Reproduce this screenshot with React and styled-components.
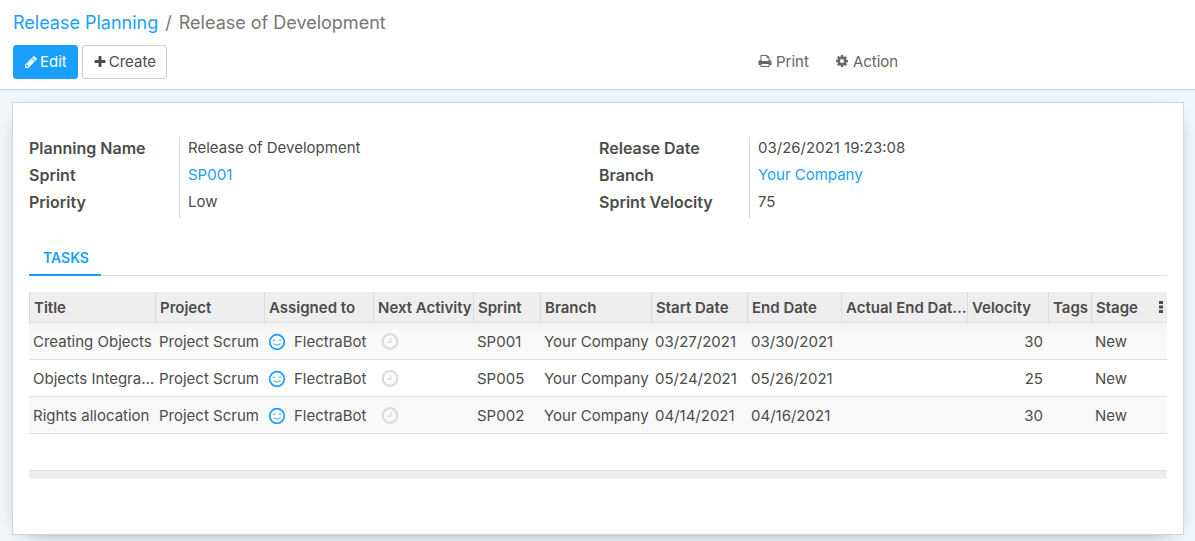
import React from "react";
import styled, { createGlobalStyle } from "styled-components";

const GlobalStyle = createGlobalStyle`
  *, *::before, *::after { box-sizing: border-box; }
  html, body, #root { min-height: 100vh; }
  body {
    margin: 0;
    background: #f0f5fa;
    color: #4c4c4c;
    font: 400 15px/23px Inter, Roboto, sans-serif;
  }
  #root { display: flex; flex-direction: column; }
  a { color: #199fff; text-decoration: none; }
  button { font: inherit; cursor: pointer; }
`;

const ControlPanel = styled.header`
  background: #fff;
  border-bottom: 1px solid #cccccc;
  padding: 9px 13px 10px;
`;

const Breadcrumb = styled.ol`
  display: flex;
  margin: 0 0 8px;
  padding: 0;
  list-style: none;
  font-size: 18px;
  line-height: 28px;
  color: #777;

  li + li::before {
    content: "/";
    padding: 0 7px;
  }
`;

const Toolbar = styled.div`
  display: grid;
  grid-template-columns: 745px 1fr;
  align-items: center;
`;

const ButtonGroup = styled.div`
  display: flex;
  gap: 4px;
`;

const Button = styled.button`
  display: flex;
  align-items: center;
  gap: 2px;
  height: 34px;
  padding: 0 10px 1px;
  border: 1px solid ${(p) => (p.$primary ? "#199fff" : "#cccccc")};
  border-radius: 3px;
  background: ${(p) => (p.$primary ? "#199fff" : "#fff")};
  color: ${(p) => (p.$primary ? "#fff" : "#4c4c4c")};
`;

const MenuGroup = styled.div`
  display: flex;
  gap: 26px;
`;

const MenuButton = styled.button`
  display: flex;
  align-items: center;
  gap: 4px;
  padding: 0 0 2px;
  border: 0;
  background: none;
  color: #666;
`;

const Glyph = styled.svg`
  width: ${(p) => p.$size || 14}px;
  height: ${(p) => p.$size || 14}px;
  flex: none;
  fill: currentColor;
`;

const Sheet = styled.main`
  margin: 12px 11px 6px 12px;
  padding: 34px 16px 55px;
  background: #fff;
  border: 1px solid #d5d5d8;
  box-shadow: 0 5px 20px -15px #000;
`;

const Groups = styled.div`
  display: grid;
  grid-template-columns: 1fr 1fr;
  gap: 2px;
`;

const Fields = styled.dl`
  display: grid;
  grid-template-columns: 150px 1fr;
  margin: 0;
`;

const FieldLabel = styled.dt`
  height: 27px;
  line-height: 22px;
  font-size: 16px;
  font-weight: 600;
`;

const FieldValue = styled.dd`
  height: 27px;
  margin: 0;
  padding-left: 8px;
  border-left: 1px solid #d9d9d9;
  line-height: 22px;
`;

const Tabs = styled.div`
  display: flex;
  margin: 22px 0 16px;
  border-bottom: 1px solid #dee2e6;
`;

const Tab = styled.button`
  height: 36px;
  margin-bottom: -1px;
  padding: 1px 12px 0 14px;
  border: 0;
  border-bottom: 2px solid #199fff;
  background: none;
  color: #199fff;
  font-size: 14px;
  font-weight: 600;
`;

const TaskTable = styled.table`
  width: 100%;
  table-layout: fixed;
  border-collapse: separate;
  border-spacing: 0;
`;

const HeadCell = styled.th`
  height: 31px;
  padding: 0 0 0 4px;
  border-left: ${(p) => (p.$plain ? "0" : "1px solid #dcdcde")};
  border-bottom: 1px solid #dee2e6;
  background: #eee;
  text-align: left;
  font-weight: 600;
  white-space: nowrap;
`;

const Row = styled.tr`
  background: ${(p) => (p.$striped ? "#f9f9f9" : "#fff")};

  &:first-child { background: linear-gradient(#f1f1f1, #f9f9f9 9px); }
`;

const Cell = styled.td`
  height: 37px;
  padding: 0 ${(p) => (p.$number ? 5 : 0)}px 0 ${(p) => (p.$icon ? 8 : 4)}px;
  border-bottom: 1px solid #dee2e6;
  text-align: ${(p) => (p.$number ? "right" : "left")};
  white-space: nowrap;
`;

const FootCell = styled.td`
  height: 9px;
  padding: 0;
  border-top: 1px solid #dee2e6;
  background: #eee;
`;

const BlankCell = styled.td`
  height: 36px;
  padding: 0;
`;

const Assignee = styled.span`
  display: flex;
  align-items: center;
  gap: 8px;
`;

const IconButton = styled.button`
  display: flex;
  align-items: center;
  padding: 0;
  border: 0;
  background: none;
  color: ${(p) => p.$color || "#4c4c4c"};
`;

const PATHS = {
  pencil:
    "M491 1536l91-91-235-235-91 91v107h128v128h107zm523-928q0-22-22-22-10 0-17 7l-542 542q-7 7-7 17 0 22 22 22 10 0 17-7l542-542q7-7 7-17zm-54-192l416 416-832 832h-416v-416zm683 96q0 53-37 90l-166 166-416-416 166-165q36-38 90-38 53 0 91 38l235 234q37 39 37 91z",
  plus:
    "M1600 736v192q0 40-28 68t-68 28h-416v416q0 40-28 68t-68 28h-192q-40 0-68-28t-28-68v-416h-416q-40 0-68-28t-28-68v-192q0-40 28-68t68-28h416v-416q0-40 28-68t68-28h192q40 0 68 28t28 68v416h416q40 0 68 28t28 68z",
  print:
    "M448 1536h896v-256h-896v256zm0-640h896v-384h-160q-40 0-68-28t-28-68v-160h-640v640zm1152 64q0-26-19-45t-45-19-45 19-19 45 19 45 45 19 45-19 19-45zm128 0v416q0 13-9.5 22.5t-22.5 9.5h-224v160q0 40-28 68t-68 28h-960q-40 0-68-28t-28-68v-160h-224q-13 0-22.5-9.5t-9.5-22.5v-416q0-79 56.5-135.5t135.5-56.5h64v-544q0-40 28-68t68-28h672q40 0 88 20t76 48l152 152q28 28 48 76t20 88v256h64q79 0 135.5 56.5t56.5 135.5z",
  gear:
    "M1152 896q0-106-75-181t-181-75-181 75-75 181 75 181 181 75 181-75 75-181zm512-109v222q0 12-8 23t-20 13l-185 28q-19 54-39 91 35 50 107 138 10 12 10 25t-9 23q-27 37-99 108t-94 71q-12 0-26-9l-138-108q-44 23-91 38-16 136-29 186-7 28-36 28h-222q-14 0-24.5-8.5t-11.5-21.5l-28-184q-49-16-90-37l-141 107q-10 9-25 9-14 0-25-11-126-114-165-168-7-10-7-23 0-12 8-23 15-21 51-66.5t54-70.5q-27-50-41-99l-183-27q-13-2-21-12.5t-8-23.5v-222q0-12 8-23t19-13l186-28q14-46 39-92-40-57-107-138-10-12-10-24 0-10 9-23 26-36 98.5-107.5t94.5-71.5q13 0 26 10l138 107q44-23 91-38 16-136 29-186 7-28 36-28h222q14 0 24.5 8.5t11.5 21.5l28 184q49 16 90 37l142-107q9-9 24-9 13 0 25 10 129 119 165 170 7 8 7 22 0 12-8 23-15 21-51 66.5t-54 70.5q26 50 41 98l183 28q13 2 21 12.5t8 23.5z",
};

const Icon = ({ name }) => (
  <Glyph viewBox="0 0 1792 1792" aria-hidden="true">
    <path d={PATHS[name]} />
  </Glyph>
);

const Smiley = () => (
  <Glyph $size={18} viewBox="0 0 18 18" aria-hidden="true">
    <g fill="none" stroke="#199fff">
      <circle cx="9" cy="10" r="7.3" strokeWidth="1.7" />
      <path d="M4.8 8.2h2.4M10.8 8.2h2.4" strokeWidth="1" opacity="0.8" />
      <path d="M5.4 11.8Q9 14.6 12.6 11.8" strokeWidth="1" opacity="0.85" />
    </g>
  </Glyph>
);

const Clock = () => (
  <Glyph $size={18} viewBox="0 0 18 18" aria-hidden="true">
    <g fill="none" stroke="currentColor">
      <circle cx="9" cy="9.5" r="7.3" strokeWidth="2.3" />
      <path d="M9.7 5.4v4.9H6.4" strokeWidth="1.4" />
    </g>
  </Glyph>
);

const Kebab = () => (
  <Glyph $size={14} viewBox="0 0 14 14" aria-hidden="true">
    <path d="M5 1h4v3H5zM5 5.5h4v3H5zM5 10h4v3H5z" />
  </Glyph>
);

const FIELDS = [
  [
    ["Planning Name", "Release of Development"],
    ["Sprint", "SP001", true],
    ["Priority", "Low"],
  ],
  [
    ["Release Date", "03/26/2021 19:23:08"],
    ["Branch", "Your Company", true],
    ["Sprint Velocity", "75"],
  ],
];

const COLUMNS = [
  ["Title", 126],
  ["Project", 109],
  ["Assigned to", 109],
  ["Next Activity", 100],
  ["Sprint", 67],
  ["Branch", 111],
  ["Start Date", 96],
  ["End Date", 94],
  ["Actual End Dat…", 126],
  ["Velocity", 81],
  ["Tags", 43],
  ["Stage", 59],
];

const TASKS = [
  { title: "Creating Objects", sprint: "SP001", start: "03/27/2021", end: "03/30/2021", velocity: 30 },
  { title: "Objects Integra…", sprint: "SP005", start: "05/24/2021", end: "05/26/2021", velocity: 25 },
  { title: "Rights allocation", sprint: "SP002", start: "04/14/2021", end: "04/16/2021", velocity: 30 },
];

export default function App() {
  return (
    <>
      <GlobalStyle />
      <ControlPanel>
        <nav aria-label="Breadcrumb">
          <Breadcrumb>
            <li><a href="#planning">Release Planning</a></li>
            <li>Release of Development</li>
          </Breadcrumb>
        </nav>
        <Toolbar>
          <ButtonGroup>
            <Button type="button" $primary><Icon name="pencil" />Edit</Button>
            <Button type="button"><Icon name="plus" />Create</Button>
          </ButtonGroup>
          <MenuGroup>
            <MenuButton type="button"><Icon name="print" />Print</MenuButton>
            <MenuButton type="button"><Icon name="gear" />Action</MenuButton>
          </MenuGroup>
        </Toolbar>
      </ControlPanel>
      <Sheet>
        <Groups>
          {FIELDS.map((group, i) => (
            <Fields key={i}>
              {group.map(([label, value, link]) => (
                <React.Fragment key={label}>
                  <FieldLabel>{label}</FieldLabel>
                  <FieldValue>{link ? <a href="#record">{value}</a> : value}</FieldValue>
                </React.Fragment>
              ))}
            </Fields>
          ))}
        </Groups>
        <Tabs role="tablist">
          <Tab type="button" role="tab" aria-selected="true">TASKS</Tab>
        </Tabs>
        <TaskTable>
          <colgroup>
            {COLUMNS.map(([name, width]) => <col key={name} width={width} />)}
            <col width={17} />
          </colgroup>
          <thead>
            <tr>
              {COLUMNS.map(([name]) => <HeadCell key={name} scope="col">{name}</HeadCell>)}
              <HeadCell $plain>
                <IconButton type="button" aria-label="Optional columns"><Kebab /></IconButton>
              </HeadCell>
            </tr>
          </thead>
          <tbody>
            {TASKS.map((t, i) => (
              <Row key={t.title} $striped={i % 2 === 0}>
                <Cell>{t.title}</Cell>
                <Cell>Project Scrum</Cell>
                <Cell><Assignee><Smiley />FlectraBot</Assignee></Cell>
                <Cell $icon>
                  <IconButton type="button" $color="#dddddd" aria-label="Schedule activity"><Clock /></IconButton>
                </Cell>
                <Cell>{t.sprint}</Cell>
                <Cell>Your Company</Cell>
                <Cell>{t.start}</Cell>
                <Cell>{t.end}</Cell>
                <Cell />
                <Cell $number>{t.velocity}</Cell>
                <Cell />
                <Cell>New</Cell>
                <Cell />
              </Row>
            ))}
            <tr><BlankCell colSpan={13} /></tr>
          </tbody>
          <tfoot>
            <tr><FootCell colSpan={13} /></tr>
          </tfoot>
        </TaskTable>
      </Sheet>
    </>
  );
}
